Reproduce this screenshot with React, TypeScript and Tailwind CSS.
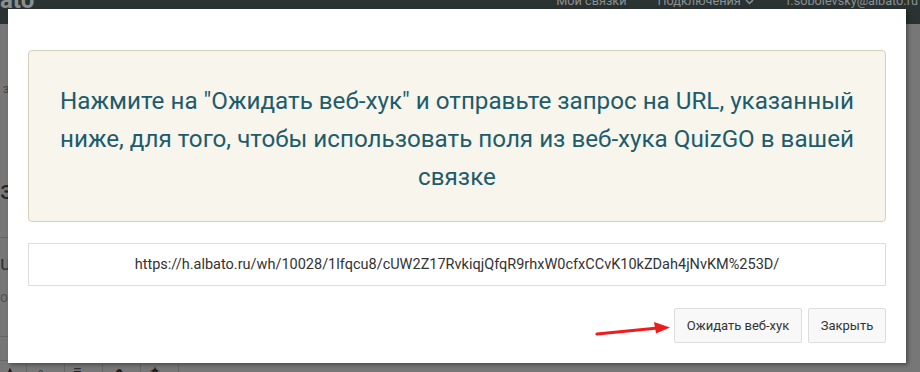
import React from "react";

export default function App() {
  return (
    <div
      className="relative w-[920px] h-[372px] overflow-hidden bg-[#777777]"
      style={{ fontFamily: "Roboto, 'Noto Sans', sans-serif" }}
    >
      {/* background page (dimmed) */}
      <header className="h-[24px] bg-[#2a3332] flex items-start justify-between overflow-hidden">
        <div className="-mt-[12px] text-[24px] font-bold leading-[24px] text-[#8a8f8f]">ato</div>
        <nav className="-mt-[7px] flex items-start pr-[2px] text-[12.7px] leading-[15px] text-[#8c9194]">
          <span>Мои связки</span>
          <span className="ml-[31px] flex items-center gap-[4px]">
            Подключения
            <svg width="9" height="6" viewBox="0 0 9 6" className="mt-[2px]">
              <path d="M1 1l3.5 3.5L8 1" stroke="#8c9194" strokeWidth="1.5" fill="none" />
            </svg>
          </span>
          <span className="ml-[33px]">r.sobolevsky@albato.ru</span>
        </nav>
      </header>
      <div className="flex flex-col text-[#2b2b2b]">
        <div className="h-[57px]" />
        <div className="pl-[3px] text-[12px] leading-[16px] text-[#444]">з</div>
        <div className="h-[78px]" />
        <div className="text-[26px] leading-[30px] text-[#222]">з</div>
        <div className="h-[32px]" />
        <div className="w-[420px] border-t border-[#666]" />
        <div className="h-[13px]" />
        <div className="text-[20px] leading-[24px] text-[#333]">u</div>
        <div className="h-[13px]" />
        <div className="text-[14px] leading-[18px] text-[#555]">oi</div>
        <div className="h-[30px]" />
        <div className="w-[420px] border-t border-[#666]" />
        <div className="h-[23px]" />
        <div className="flex h-[20px] w-[420px] border-t border-[#666] text-[14px] leading-[14px] pt-[3px] text-[#222]">
          <div className="w-[27px] border-r border-[#666] pl-[3px]">▲</div>
          <div className="w-[38px] border-r border-[#666] pl-[11px]">◦</div>
          <div className="w-[38px] border-r border-[#666] pl-[8px]">≡</div>
          <div className="w-[38px] border-r border-[#666] pl-[12px]">●</div>
          <div className="w-[38px] border-r border-[#666] pl-[8px]">✦</div>
        </div>
      </div>

      {/* modal overlay */}
      <div className="absolute inset-0 pl-[8px] pt-[9px]">
        <div className="w-[898px] h-[354px] bg-white shadow-[2px_2px_4px_rgba(0,0,0,0.35)] px-[20px] pt-[41px] flex flex-col">
          <div className="h-[172px] rounded-[4px] border border-[#d4d1bb] bg-[#f8f5ec] flex items-center justify-center px-[14px] pt-[6px]">
            <p className="text-center text-[24.2px] leading-[38px] text-[#1c5c6c]">
              Нажмите на "Ожидать веб-хук" и отправьте запрос на URL, указанный ниже, для того, чтобы использовать поля из веб-хука QuizGO в вашей связке
            </p>
          </div>
          <div className="mt-[21px] h-[43px] border border-[#dddddd] flex items-center justify-center text-[14.5px] text-[#333]">
            https://h.albato.ru/wh/10028/1lfqcu8/cUW2Z17RvkiqjQfqR9rhxW0cfxCCvK10kZDah4jNvKM%253D/
          </div>
          <div className="mt-[22px] flex justify-end gap-[6px]">
            <button className="h-[35px] w-[128px] rounded-[2px] border border-[#dddddd] bg-[#f8f8f8] text-[13px] text-[#333]">
              Ожидать веб-хук
            </button>
            <button className="h-[35px] w-[78px] rounded-[2px] border border-[#dddddd] bg-[#f8f8f8] text-[13px] text-[#333]">
              Закрыть
            </button>
          </div>
        </div>
      </div>

      {/* red annotation arrow */}
      <svg className="absolute left-[594px] top-[318px]" width="80" height="20" viewBox="0 0 80 20">
        <path d="M3 16 L64 10" stroke="#ee1c1c" strokeWidth="3" strokeLinecap="round" fill="none" />
        <path d="M76 9.5 L60 4 L62 15.5 Z" fill="#ee1c1c" />
      </svg>
    </div>
  );
}
